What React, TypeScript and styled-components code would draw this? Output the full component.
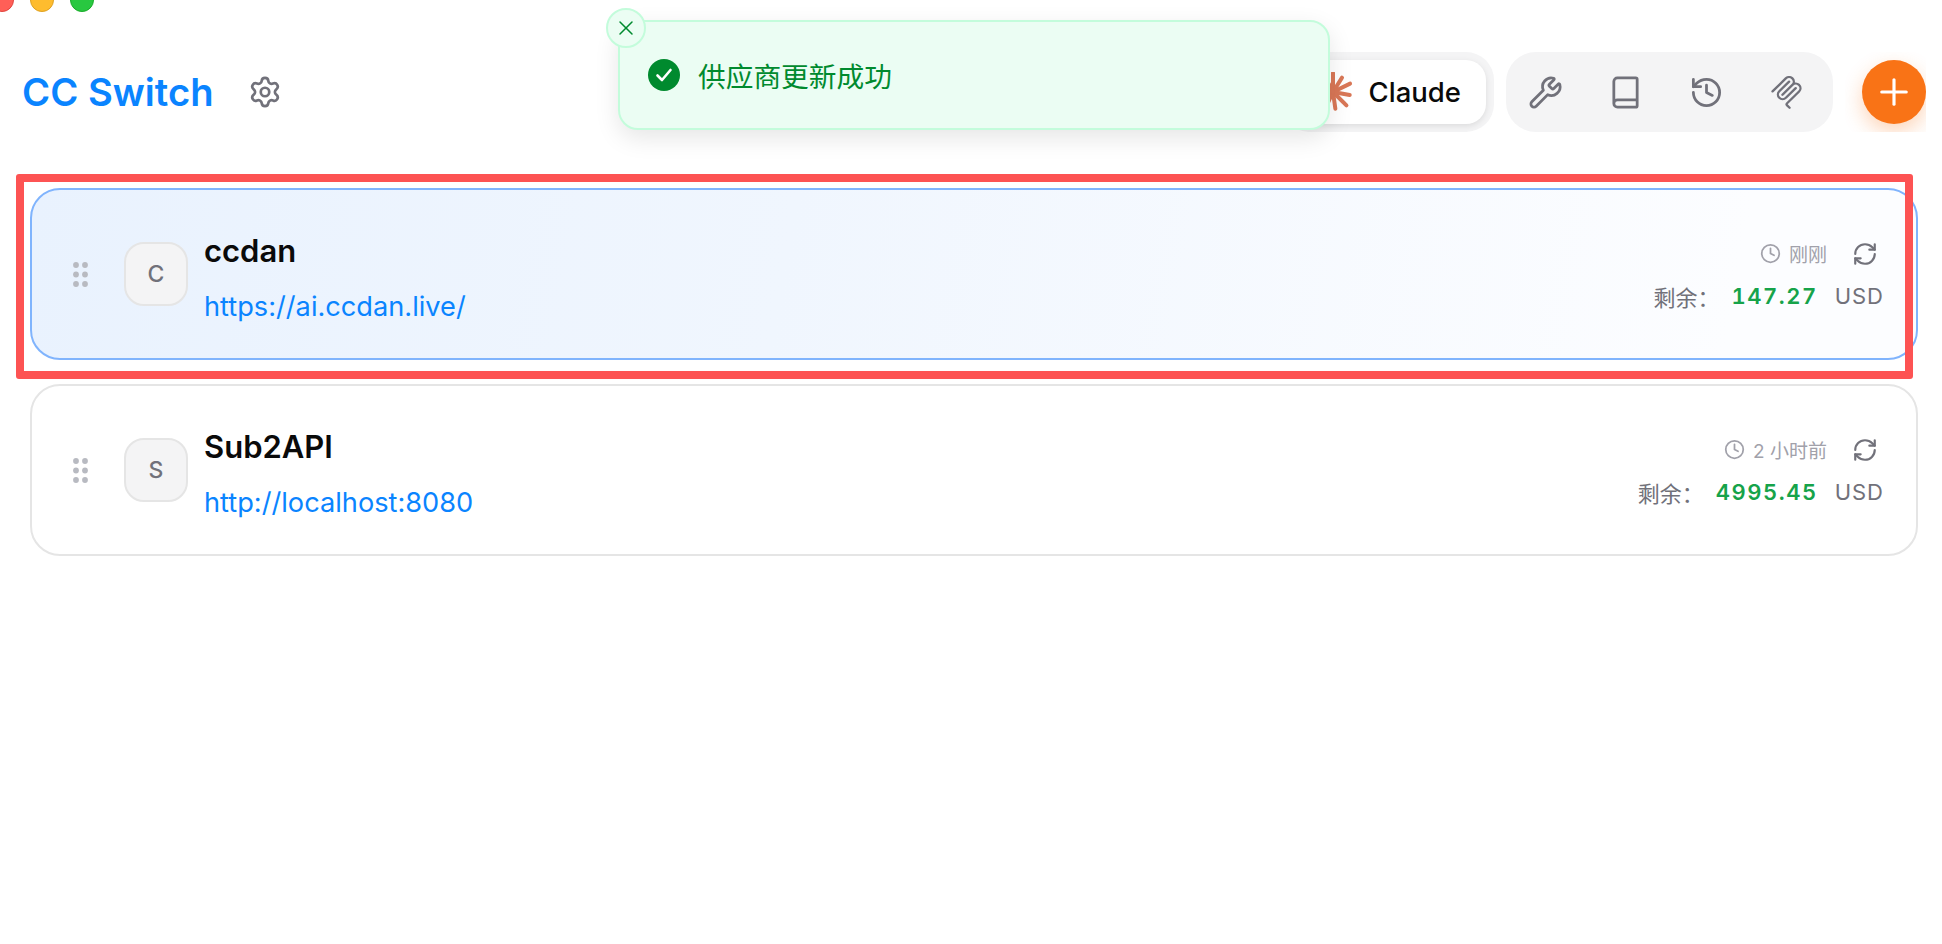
import React from 'react';
import styled, { createGlobalStyle } from 'styled-components';
import { Settings, Wrench, Book, History, Plus, X, Clock, RefreshCw } from 'lucide-react';

const GlobalStyle = createGlobalStyle`
  html, body {
    margin: 0;
    padding: 0;
    background: #fff;
    font-family: Inter, "Noto Sans CJK SC", sans-serif;
  }
`;

const Page = styled.div`
  position: relative;
  width: 1942px;
  height: 944px;
  overflow: hidden;
  background: #fff;
`;

const Light = styled.span<{ $left: number; $color: string; $edge: string }>`
  position: absolute;
  top: -12px;
  left: ${p => p.$left}px;
  width: 24px;
  height: 24px;
  box-sizing: border-box;
  border-radius: 50%;
  background: ${p => p.$color};
  border: 1px solid ${p => p.$edge};
`;

const Header = styled.header`
  display: flex;
  align-items: center;
  justify-content: space-between;
  height: 80px;
  padding: 52px 16px 0 22px;
`;

const Brand = styled.div`
  display: flex;
  align-items: center;
  gap: 34px;
`;

const Title = styled.h1`
  margin: 0;
  font-size: 38.2px;
  font-weight: 600;
  color: #0a84ff;
`;

const GearIcon = styled(Settings)`
  width: 34px;
  height: 34px;
  color: #71717a;
`;

const Actions = styled.div`
  display: flex;
  align-items: center;
  gap: 12px;
`;

const Group = styled.div`
  display: flex;
  align-items: center;
  height: 80px;
  box-sizing: border-box;
  padding: 8px;
  background: #f4f4f5;
  border-radius: 28px;
`;

const Tab = styled.div`
  display: flex;
  align-items: center;
  gap: 16px;
  height: 64px;
  padding: 0 25px 0 24px;
  background: #fff;
  border-radius: 20px;
  box-shadow: 0 2px 6px rgba(0, 0, 0, 0.1);
  font-size: 27.5px;
  font-weight: 500;
  color: #0a0a0a;
`;

const Tools = styled(Group)`
  gap: 16.5px;
  width: 327px;
  padding-left: 7px;
  border-radius: 30px;
`;

const ToolButton = styled.div`
  display: flex;
  align-items: center;
  justify-content: center;
  width: 64px;
  height: 64px;
  color: #71717a;
`;

const PlusSlot = styled.div`
  height: 80px;
  padding: 8px 0 0 17px;
  box-sizing: border-box;
  overflow: hidden;
`;

const PlusButton = styled.div`
  display: flex;
  align-items: center;
  justify-content: center;
  width: 64px;
  height: 64px;
  border-radius: 50%;
  background: #f97316;
  color: #fff;
  box-shadow: 0 8px 20px rgba(249, 115, 22, 0.3);
`;

const List = styled.main`
  display: flex;
  flex-direction: column;
  gap: 24px;
  margin-top: 56px;
  padding: 0 24px 0 30px;
`;

const Card = styled.section<{ $active?: boolean }>`
  position: relative;
  display: flex;
  align-items: center;
  height: 172px;
  box-sizing: border-box;
  padding: 0 32px 0 41px;
  border-radius: 30px;
  border: 2px solid ${p => (p.$active ? '#80b4fd' : '#e5e5e5')};
  background: ${p => (p.$active ? 'linear-gradient(100deg, #e9f2fe 0%, #f0f6fe 40%, #fcfdff 90%)' : '#fff')};
`;

const Highlight = styled.div`
  position: absolute;
  top: -16px;
  left: -16px;
  right: 3px;
  bottom: -21px;
  border: 8px solid #fd5353;
  border-radius: 3px;
  pointer-events: none;
`;

const DragDots = styled.svg`
  width: 15px;
  height: 25px;
  fill: #b8bac1;
  flex-shrink: 0;
`;

const Avatar = styled.div`
  display: flex;
  align-items: center;
  justify-content: center;
  width: 64px;
  height: 64px;
  box-sizing: border-box;
  margin-left: 36px;
  flex-shrink: 0;
  border: 2px solid #e5e5e5;
  border-radius: 20px;
  background: #f4f4f5;
  font-size: 23px;
  font-weight: 500;
  color: #71717a;
`;

const Info = styled.div`
  display: flex;
  flex-direction: column;
  gap: 20px;
  margin-left: 16px;
  padding-top: 10px;
  flex: 1;
`;

const Name = styled.div`
  font-size: 31px;
  line-height: 36px;
  font-weight: 600;
  color: #0a0a0a;
`;

const Url = styled.div`
  font-size: 27.2px;
  line-height: 36px;
  color: #0a84ff;
`;

const Usage = styled.div`
  display: flex;
  flex-direction: column;
  align-items: flex-end;
  gap: 14.5px;
  padding-top: 6px;
`;

const Updated = styled.div`
  display: flex;
  align-items: center;
  height: 24px;
  padding-right: 6px;
  font-size: 19px;
  color: #a1a1aa;
`;

const ClockIcon = styled(Clock)`
  width: 21px;
  height: 21px;
  margin-right: 8px;
`;

const RefreshIcon = styled(RefreshCw)`
  width: 26px;
  height: 26px;
  margin-left: 25px;
  color: #71717a;
`;

const Balance = styled.div`
  display: flex;
  align-items: center;
  font-size: 22px;
  color: #71717a;
`;

const Amount = styled.span`
  margin: 0 17px 0 12px;
  font-weight: 600;
  font-variant-numeric: tabular-nums;
  letter-spacing: 1.5px;
  color: #16a34a;
`;

const Unit = styled.span`
  letter-spacing: 1px;
`;

const Toast = styled.div`
  position: absolute;
  top: 20px;
  left: 618px;
  display: flex;
  align-items: center;
  gap: 18px;
  width: 712px;
  height: 110px;
  box-sizing: border-box;
  padding-left: 28px;
  border: 2px solid #c3fcdb;
  border-radius: 20px;
  background: #ebfdf3;
  box-shadow: 0 8px 24px rgba(0, 0, 0, 0.1);
  font-size: 27.7px;
  color: #008a2e;
`;

const ToastClose = styled.div`
  position: absolute;
  top: -14px;
  left: -14px;
  display: flex;
  align-items: center;
  justify-content: center;
  width: 40px;
  height: 40px;
  box-sizing: border-box;
  border: 2px solid #c3fcdb;
  border-radius: 50%;
  background: #ebfdf3;
  color: #008a2e;
`;

const ClaudeMark = () => {
  const rays = [0, 32, 64, 100, 135, 172, 205, 238, 268, 300, 332];
  return (
    <svg width="40" height="40" viewBox="0 0 40 40">
      {rays.map((a, i) => (
        <line
          key={a}
          x1="20"
          y1="20"
          x2="20"
          y2={i % 2 ? 3 : 1}
          stroke="#d97757"
          strokeWidth="4"
          strokeLinecap="round"
          transform={`rotate(${a} 20 20)`}
        />
      ))}
    </svg>
  );
};

const McpMark = () => (
  <svg width="33" height="33" viewBox="0 0 24 24" fill="currentColor">
    <path d="M15.688 2.343a2.588 2.588 0 00-3.61 0l-9.626 9.44a.863.863 0 01-1.203 0 .823.823 0 010-1.18l9.626-9.44a4.313 4.313 0 016.016 0 4.116 4.116 0 011.204 3.54 4.3 4.3 0 013.609 1.18l.05.05a4.115 4.115 0 010 5.9l-8.706 8.537a.274.274 0 000 .393l1.788 1.754a.823.823 0 010 1.18.863.863 0 01-1.203 0l-1.788-1.753a1.92 1.92 0 010-2.754l8.706-8.538a2.47 2.47 0 000-3.54l-.05-.049a2.588 2.588 0 00-3.607-.003l-7.172 7.034-.002.002-.098.097a.863.863 0 01-1.204 0 .823.823 0 010-1.18l7.273-7.133a2.47 2.47 0 00-.003-3.537z" />
    <path d="M14.485 4.703a.823.823 0 000-1.18.863.863 0 00-1.204 0l-7.119 6.982a4.115 4.115 0 000 5.9 4.314 4.314 0 006.016 0l7.12-6.982a.823.823 0 000-1.18.863.863 0 00-1.204 0l-7.119 6.982a2.588 2.588 0 01-3.61 0 2.47 2.47 0 010-3.54l7.12-6.982z" />
  </svg>
);

const Grip = () => (
  <DragDots viewBox="0 0 15 25">
    {[3, 12].map(x =>
      [3, 12.5, 22].map(y => <circle key={`${x}-${y}`} cx={x} cy={y} r="2.9" />)
    )}
  </DragDots>
);

const providers = [
  { name: 'ccdan', letter: 'C', url: 'https://ai.ccdan.live/', time: '刚刚', amount: '147.27', active: true },
  { name: 'Sub2API', letter: 'S', url: 'http://localhost:8080', time: '2 小时前', amount: '4995.45', active: false },
];

const App: React.FC = () => (
  <Page>
    <GlobalStyle />
    <Light $left={-10} $color="#ff5f57" $edge="#e0443e" />
    <Light $left={30} $color="#febc2e" $edge="#dea123" />
    <Light $left={70} $color="#28c840" $edge="#1aab29" />

    <Header>
      <Brand>
        <Title>CC Switch</Title>
        <GearIcon strokeWidth={1.9} />
      </Brand>
      <Actions>
        <Group>
          <Tab>
            <ClaudeMark />
            Claude
          </Tab>
        </Group>
        <Tools>
          <ToolButton><Wrench size={35} strokeWidth={1.9} /></ToolButton>
          <ToolButton><Book size={35} strokeWidth={1.9} /></ToolButton>
          <ToolButton><History size={35} strokeWidth={1.9} /></ToolButton>
          <ToolButton><McpMark /></ToolButton>
        </Tools>
        <PlusSlot>
          <PlusButton><Plus size={42} strokeWidth={1.8} /></PlusButton>
        </PlusSlot>
      </Actions>
    </Header>

    <List>
      {providers.map(p => (
        <Card key={p.name} $active={p.active}>
          {p.active && <Highlight />}
          <Grip />
          <Avatar>{p.letter}</Avatar>
          <Info>
            <Name>{p.name}</Name>
            <Url>{p.url}</Url>
          </Info>
          <Usage>
            <Updated>
              <ClockIcon />
              {p.time}
              <RefreshIcon />
            </Updated>
            <Balance>
              剩余：
              <Amount>{p.amount}</Amount>
              <Unit>USD</Unit>
            </Balance>
          </Usage>
        </Card>
      ))}
    </List>

    <Toast>
      <ToastClose><X size={24} strokeWidth={1.5} /></ToastClose>
      <svg width="32" height="32" viewBox="0 0 32 32">
        <circle cx="16" cy="16" r="16" fill="#008a2e" />
        <path d="M9.5 16.5l4.5 4.5 8.5-10" fill="none" stroke="#fff" strokeWidth="2.6" strokeLinecap="round" strokeLinejoin="round" />
      </svg>
      供应商更新成功
    </Toast>
  </Page>
);

export default App;
